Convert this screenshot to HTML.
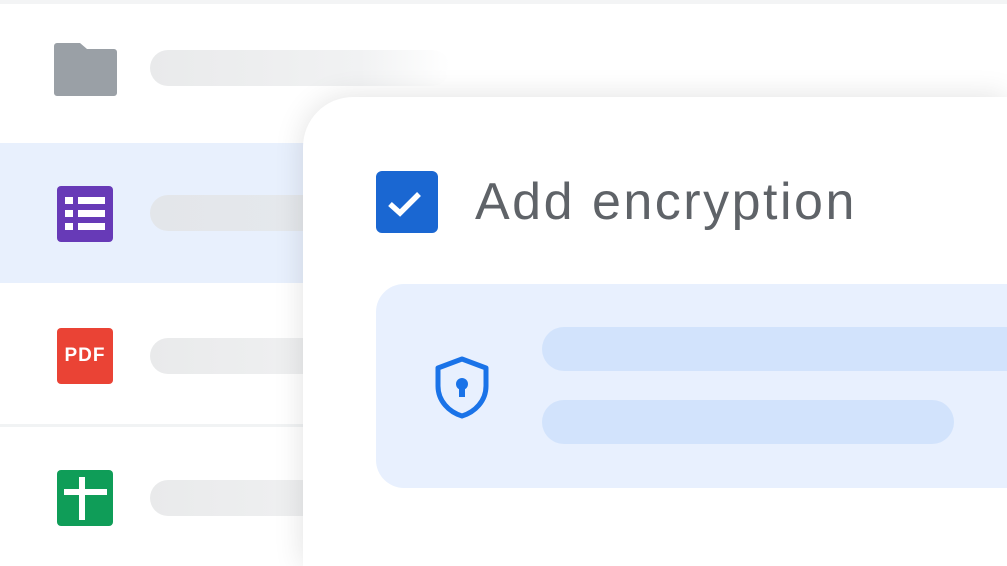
<!DOCTYPE html>
<html style="overflow:hidden;height:566px"><head><style>
body{margin:0;width:1007px;height:566px;overflow:hidden;background:#fff;position:relative;font-family:"Liberation Sans",Arial,sans-serif}
.a{position:absolute}
.bar{position:absolute;left:150px;width:300px;height:36px;border-radius:18px;background:linear-gradient(90deg,#e9eaeb,#f1f2f3 70%,rgba(245,245,245,0))}
</style></head><body>
<div class="a" style="left:0;top:0;width:1007px;height:4px;background:#f3f4f5"></div>
<div class="a" style="left:0;top:143px;width:1007px;height:140px;background:#e8f0fd"></div>
<div class="a" style="left:0;top:424px;width:1007px;height:3px;background:#f1f3f4"></div>
<div class="bar" style="top:50px"></div>
<div class="bar" style="top:195px;background:linear-gradient(90deg,#e3e6ea,#e7eaee)"></div>
<div class="bar" style="top:338px"></div>
<div class="bar" style="top:480px"></div>
<svg class="a" style="left:54px;top:43px" width="63" height="54" viewBox="0 0 63 54"><path d="M3 0H26L33 6H60a3 3 0 0 1 3 3V50a3 3 0 0 1-3 3H3a3 3 0 0 1-3-3V3a3 3 0 0 1 3-3Z" fill="#9aa0a6"/></svg>
<svg class="a" style="left:57px;top:186px" width="56" height="56" viewBox="0 0 56 56"><rect width="56" height="56" rx="4" fill="#673ab7"/><g fill="#fff"><rect x="8" y="11" width="8" height="7"/><rect x="21" y="11" width="27" height="7"/><rect x="8" y="24" width="8" height="7"/><rect x="21" y="24" width="27" height="7"/><rect x="8" y="37" width="8" height="7"/><rect x="21" y="37" width="27" height="7"/></g></svg>
<div class="a" style="left:57px;top:328px;width:56px;height:56px;border-radius:4px;background:#ea4335;color:#fff;font-weight:bold;font-size:19px;line-height:56px;text-align:center;letter-spacing:1px">PDF</div>
<svg class="a" style="left:57px;top:470px" width="56" height="56" viewBox="0 0 56 56"><rect width="56" height="56" rx="4" fill="#0f9d58"/><rect x="7" y="19" width="43" height="6" fill="#fff"/><rect x="22" y="7" width="6" height="43" fill="#fff"/></svg>
<div class="a" style="left:303px;top:97px;width:704px;height:469px;border-radius:50px 0 0 0;background:#fff;box-shadow:0 0 30px rgba(0,0,0,0.12)"></div>
<svg class="a" style="left:376px;top:171px" width="62" height="62" viewBox="0 0 62 62"><rect width="62" height="62" rx="6" fill="#1a67d2"/><path d="M14 33L24 42L43 23" stroke="#fff" stroke-width="5.5" fill="none"/></svg>
<div class="a" style="left:475px;top:172px;font-size:52px;color:#5f6368;line-height:60px;letter-spacing:2.5px;white-space:nowrap">Add encryption</div>
<div class="a" style="left:376px;top:284px;width:631px;height:204px;border-radius:28px 0 0 28px;background:#e8f0fe"></div>
<svg class="a" style="left:435px;top:356px" width="54" height="63" viewBox="0 0 54 63"><path d="M27 3L51 12V30C51 45 40 56 27 60C14 56 3 45 3 30V12Z" stroke="#1a73e8" stroke-width="5" fill="none" stroke-linejoin="round"/><circle cx="27" cy="28" r="6" fill="#1a73e8"/><rect x="24" y="30" width="6" height="11" fill="#1a73e8"/></svg>
<div class="a" style="left:542px;top:327px;width:465px;height:44px;border-radius:22px 0 0 22px;background:#d2e3fc"></div>
<div class="a" style="left:542px;top:400px;width:412px;height:44px;border-radius:22px;background:#d2e3fc"></div>
</body></html>
